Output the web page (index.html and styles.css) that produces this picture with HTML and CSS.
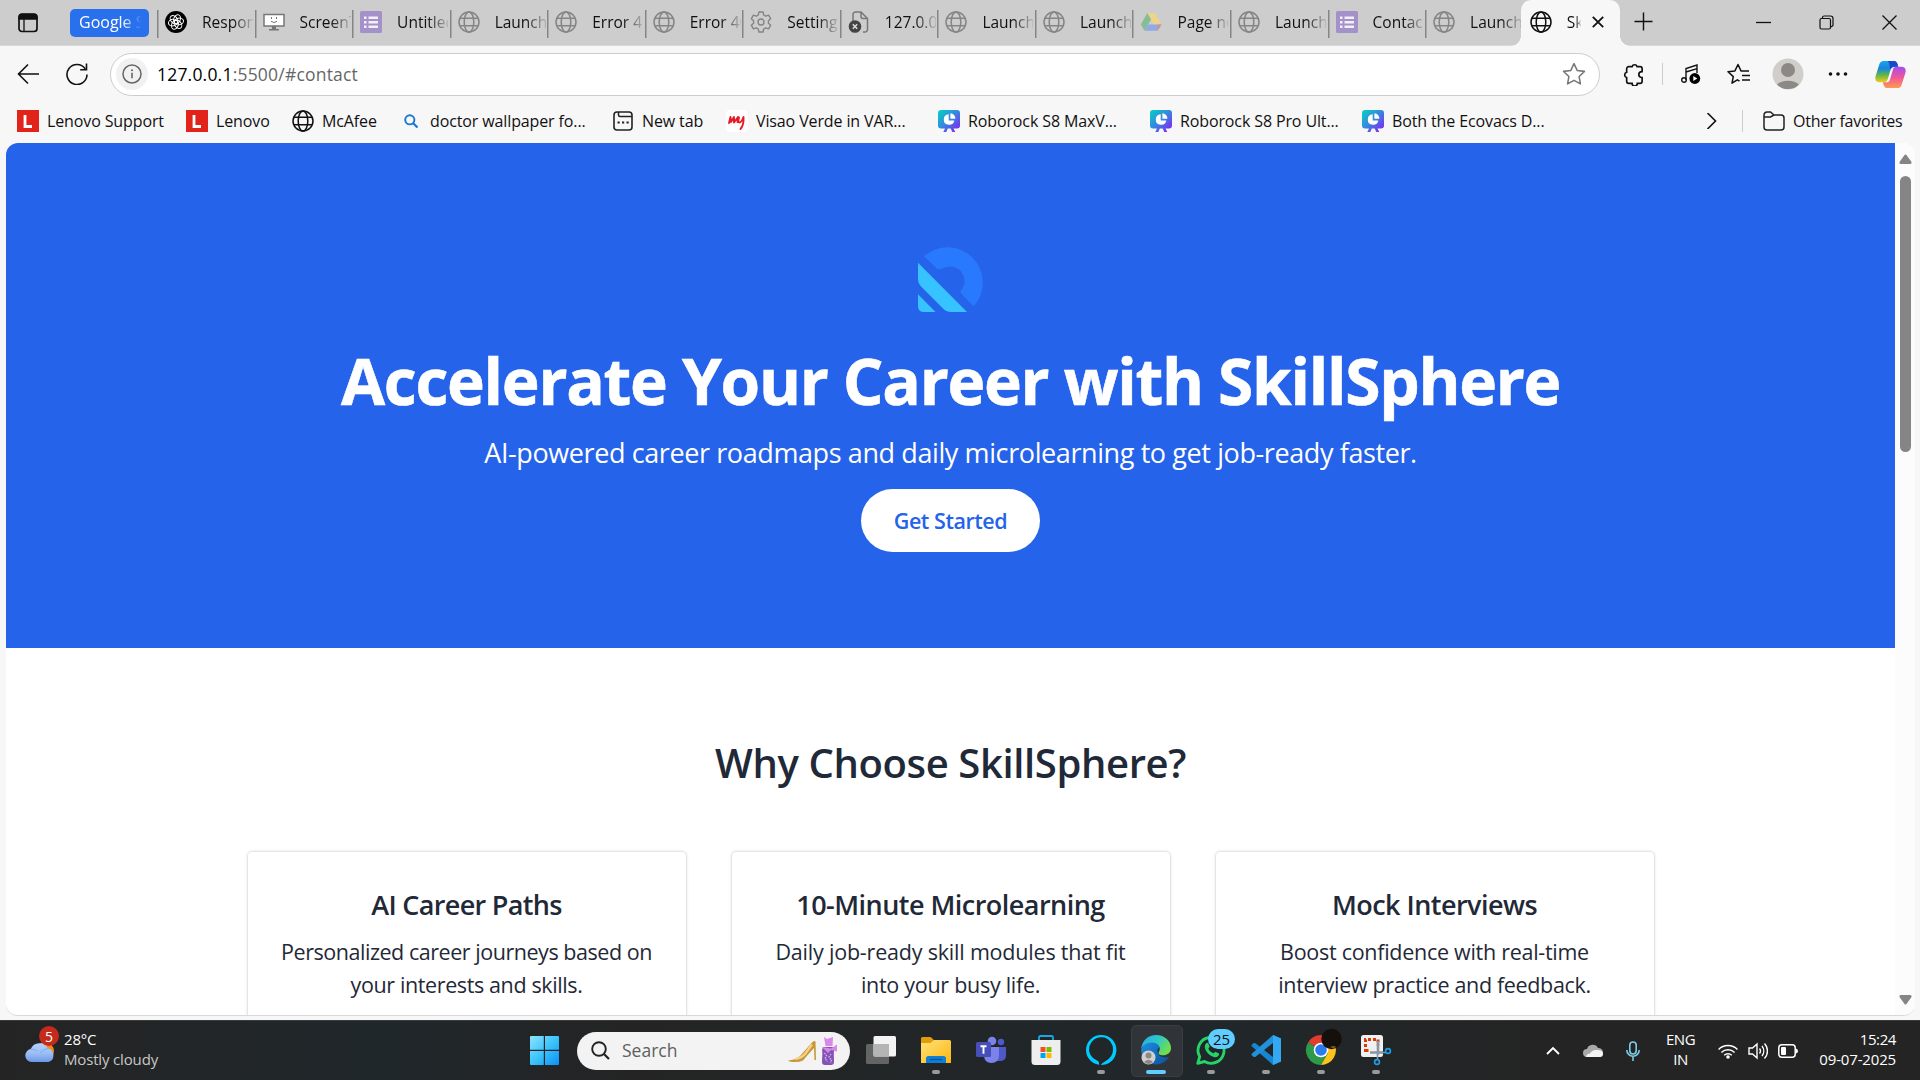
FILE: index.html
```html
<!DOCTYPE html>
<html lang="en">
<head>
<meta charset="utf-8">
<title>SkillSphere</title>
<link rel="stylesheet" href="styles.css">
</head>
<body>
<svg class="defs" aria-hidden="true">
  <defs>
    <linearGradient id="robo-g" x1="0" y1="0" x2="1" y2="1"><stop offset="0" stop-color="#00d4c0"/><stop offset=".5" stop-color="#3b82e0"/><stop offset="1" stop-color="#8b18f5"/></linearGradient>
    <linearGradient id="win-g" x1="0" y1="0" x2="1" y2="1"><stop offset="0" stop-color="#8ee3ff"/><stop offset=".5" stop-color="#3cc4fb"/><stop offset="1" stop-color="#0a90f5"/></linearGradient>
    <linearGradient id="cloud-g" x1="0" y1="0" x2="0" y2="1"><stop offset="0" stop-color="#b4d0fb"/><stop offset=".55" stop-color="#9bbdf6"/><stop offset="1" stop-color="#6d98e6"/></linearGradient>
    <linearGradient id="folder-g" x1="0" y1="0" x2="1" y2="1"><stop offset="0" stop-color="#ffe27a"/><stop offset="1" stop-color="#fbb710"/></linearGradient>
    <linearGradient id="edge-top" x1="0" y1="0" x2="1" y2=".5"><stop offset="0" stop-color="#2aa6ee"/><stop offset=".55" stop-color="#2fc6c6"/><stop offset="1" stop-color="#6ee04e"/></linearGradient>
    <linearGradient id="edge-bot" x1="0" y1="0" x2="1" y2="1"><stop offset="0" stop-color="#1c94e8"/><stop offset="1" stop-color="#0b4f9c"/></linearGradient>
    <linearGradient id="cop-a" x1="0" y1="0" x2="0" y2="1"><stop offset="0" stop-color="#17a6f2"/><stop offset=".35" stop-color="#1a83dd"/><stop offset=".65" stop-color="#58b64e"/><stop offset="1" stop-color="#f7cc13"/></linearGradient>
    <linearGradient id="cop-b" x1="0" y1="0" x2="0" y2="1"><stop offset="0" stop-color="#a44df0"/><stop offset=".5" stop-color="#f0569a"/><stop offset="1" stop-color="#ff9a4d"/></linearGradient>
    <symbol id="globe" viewBox="0 0 22 22"><g fill="none" stroke="currentColor" stroke-width="1.5"><circle cx="11" cy="11" r="10"/><ellipse cx="11" cy="11" rx="4.8" ry="10"/><path d="M1.9 7.3h18.2M1.9 14.7h18.2"/></g></symbol>
    <symbol id="form" viewBox="0 0 22 22"><rect width="22" height="22" rx="1.5" fill="#a591c9"/><path d="M4 5.5h2.5v2.5H4zM8.5 5.5H18v2.5H8.5zM4 10h2.5v2.5H4zM8.5 10H18v2.5H8.5zM4 14.5h2.5V17H4zM8.5 14.5H18V17H8.5z" fill="#f4f0fa"/></symbol>
    <symbol id="lenovo" viewBox="0 0 22 22"><rect width="22" height="22" fill="#e2231a"/><path d="M8 5v11.5h7" fill="none" stroke="#fff" stroke-width="2.8"/></symbol>
    <symbol id="robo" viewBox="0 0 22 22"><path d="M3 0h16a3 3 0 0 1 3 3v12.500a3 3 0 0 1-3 3h-3.500l1.800 3.500h-3l-1.600-3.500H9.800L8.300 22h-3L7 18.500H3a3 3 0 0 1-3-3V3a3 3 0 0 1 3-3z" fill="url(#robo-g)"/><path d="M10.700 4.200a5.300 5.300 0 1 0 5.600 6.300h-5.600z" fill="#fff"/><path d="M12.400 3.200v5.500h5a5.300 5.300 0 0 0-5-5.500z" fill="#fff"/></symbol>
  </defs>
</svg>

<div class="tabstrip">
  <svg class="workspace" viewBox="0 0 20 20"><rect x="1" y="1.5" width="18" height="17" rx="3" fill="none" stroke="#111" stroke-width="1.7"/><path d="M1 6V4a3 3 0 0 1 3-3h12a3 3 0 0 1 3 3v2zM6 6v12" fill="#111" stroke="#111" stroke-width="1.3"/></svg>
  <div class="group"><span class="t">Google S</span></div>
  <div class="tabs">
    <div class="tab"><svg viewBox="0 0 22 22"><circle cx="11" cy="11" r="11" fill="#000"/><g fill="none" stroke="#fff" stroke-width="1"><ellipse cx="11" cy="8" rx="3.3" ry="4.6" transform="rotate(20 11 11)"/><ellipse cx="11" cy="8" rx="3.3" ry="4.6" transform="rotate(80 11 11)"/><ellipse cx="11" cy="8" rx="3.3" ry="4.6" transform="rotate(140 11 11)"/><ellipse cx="11" cy="8" rx="3.3" ry="4.6" transform="rotate(200 11 11)"/><ellipse cx="11" cy="8" rx="3.3" ry="4.6" transform="rotate(260 11 11)"/><ellipse cx="11" cy="8" rx="3.3" ry="4.6" transform="rotate(320 11 11)"/></g></svg><span class="t">Respon</span></div>
    <div class="tab"><svg viewBox="0 0 22 22"><path d="M1 3.500h20v11.500H1z" fill="#fff" stroke="#777" stroke-width="1.5"/><path d="M9 15h4v3H9zM6 18h10v1.500H6z" fill="#777"/><path d="M8.500 6v2M13.500 6v2M8 10.300q3 2.500 6 0" stroke="#777" fill="none"/></svg><span class="t">ScreenT</span></div>
    <div class="tab"><svg><use href="#form"/></svg><span class="t">Untitled</span></div>
    <div class="tab dim"><svg><use href="#globe"/></svg><span class="t">Launch</span></div>
    <div class="tab dim"><svg><use href="#globe"/></svg><span class="t">Error 40</span></div>
    <div class="tab dim"><svg><use href="#globe"/></svg><span class="t">Error 40</span></div>
    <div class="tab dim"><svg viewBox="0 0 22 22"><g fill="none" stroke="currentColor" stroke-width="1.4" stroke-linejoin="round"><path d="M8.900 1h4.200l.6 3 2 1.200 2.900-1 2.100 3.600-2.300 2v2.400l2.300 2-2.100 3.600-2.900-1-2 1.200-.6 3H8.900l-.6-3-2-1.200-2.900 1-2.100-3.600 2.300-2V9.800l-2.300-2 2.100-3.600 2.900 1 2-1.200z"/><circle cx="11" cy="11" r="3"/></g></svg><span class="t">Setting</span></div>
    <div class="tab dim"><svg viewBox="0 0 22 22"><path d="M5 11V3.500A2.500 2.500 0 0 1 7.500 1H13l6.500 6.500v11A2.500 2.500 0 0 1 17 21h-2M13 1v4.500a2 2 0 0 0 2 2h4.500" fill="none" stroke="#777" stroke-width="1.5"/><circle cx="7" cy="15.500" r="6.300" fill="#444"/><path d="M4.800 13.300l4.400 4.400M9.200 13.300l-4.400 4.400" stroke="#ddd" stroke-width="1.5"/></svg><span class="t">127.0.0</span></div>
    <div class="tab dim"><svg><use href="#globe"/></svg><span class="t">Launch</span></div>
    <div class="tab dim"><svg><use href="#globe"/></svg><span class="t">Launch</span></div>
    <div class="tab"><svg viewBox="0 0 22 22"><path d="M7.300 2h7.400L11 8.500 4.500 19.800.8 13.400z" fill="#86bd95"/><path d="M7.300 2h7.400l6.700 11.500h-7.300z" fill="#eed488"/><path d="M4.500 19.800L8 13.500h13.400L17.600 19.800z" fill="#8fabe2"/><path d="M17.600 13.500h3.800l-3.600 6z" fill="#dd8d85"/></svg><span class="t">Page no</span></div>
    <div class="tab dim"><svg><use href="#globe"/></svg><span class="t">Launch</span></div>
    <div class="tab"><svg><use href="#form"/></svg><span class="t">Contac</span></div>
    <div class="tab dim"><svg><use href="#globe"/></svg><span class="t">Launch</span></div>
    <div class="tab active"><svg><use href="#globe"/></svg><span class="t short">Sk</span><svg class="close" viewBox="0 0 12 12"><path d="M.8.8l10.400 10.400M11.200.8L.8 11.200" stroke="#111" stroke-width="1.8"/></svg></div>
  </div>
  <svg class="plus" viewBox="0 0 20 20"><path d="M10 .5v19M.5 10h19" stroke="#111" stroke-width="1.5"/></svg>
  <div class="winctl">
    <svg viewBox="0 0 15 15"><path d="M0 7.500h15" stroke="#111" stroke-width="1.3"/></svg>
    <svg viewBox="0 0 15 15"><rect x="1" y="3.500" width="10.500" height="10.500" rx="1.500" fill="none" stroke="#111" stroke-width="1.2"/><path d="M3.500 3.500V2.200Q3.800 1 5 1h6.500Q14 1 14 3.500V10q0 1.500-2.500 1.800" fill="none" stroke="#111" stroke-width="1.2"/></svg>
    <svg viewBox="0 0 15 15"><path d="M.5.5l14 14M14.500.5l-14 14" stroke="#111" stroke-width="1.3"/></svg>
  </div>
</div>

<div class="toolbar">
  <svg class="back" viewBox="0 0 22 22"><path d="M22 11H1.500M11 1.500L1.500 11l9.500 9.500" fill="none" stroke="#111" stroke-width="1.6"/></svg>
  <svg class="reload" viewBox="0 0 22 22"><path d="M19.200 5.800A10 10 0 1 0 21 11.500M20.500.5v6.300h-6.300" fill="none" stroke="#111" stroke-width="1.6"/></svg>
  <div class="address">
    <span class="info"><svg viewBox="0 0 20 20"><circle cx="10" cy="10" r="9" fill="none" stroke="#666" stroke-width="1.5"/><path d="M10 8.800v5.400" stroke="#666" stroke-width="1.6"/><circle cx="10" cy="6.300" r="1" fill="#666"/></svg></span>
    <span class="url"><b>127.0.0.1</b>:5500/#contact</span>
    <svg class="star" viewBox="0 0 22 22"><path d="M11 1.500l2.900 6.200 6.700.9-4.900 4.700 1.200 6.800L11 16.800l-5.900 3.300 1.200-6.800L1.400 8.600l6.700-.9z" fill="none" stroke="#777" stroke-width="1.4" stroke-linejoin="round"/></svg>
  </div>
  <svg class="puzzle" viewBox="0 0 22 22"><path d="M5.500 3.500h3.200a2.500 2.500 0 0 1 4.800 0h2.800a2 2 0 0 1 2 2v2.700h-.8a2.900 2.900 0 0 0 0 5.700h.8v3.600a2 2 0 0 1-2 2h-2.600a2.500 2.500 0 0 1-5 0H5.500a2 2 0 0 1-2-2v-3.600a2.600 2.600 0 0 1 0-5V5.500a2 2 0 0 1 2-2z" fill="none" stroke="#111" stroke-width="1.6"/></svg>
  <i class="vr"></i>
  <svg class="music" viewBox="0 0 20 20"><path d="M5 16V4.500L16 1v8M5 8l11-3.300" fill="none" stroke="#111" stroke-width="1.4"/><circle cx="3" cy="16" r="2.300" fill="none" stroke="#111" stroke-width="1.4"/><circle cx="13.800" cy="14.500" r="5.400" fill="#000"/><path d="M12.300 11.900v5.200l4-2.600z" fill="#fff"/></svg>
  <svg class="favs" viewBox="0 0 23 22"><path d="M12.500 18l-2.200-1.200L5 20.200l1.300-6.600L1 8.800l6.900-.9L11 1.500l3 6.400h8M15 12.500h8M15 17h8" fill="none" stroke="#111" stroke-width="1.5" stroke-linejoin="round"/></svg>
  <svg class="avatar" viewBox="0 0 32 32"><circle cx="16" cy="16" r="15.500" fill="#d0cecb"/><circle cx="16" cy="12" r="7" fill="#8b8885"/><path d="M5 26.500a13 8 0 0 1 22 0 15.500 15.500 0 0 1-22 0z" fill="#8b8885"/></svg>
  <svg class="dots" viewBox="0 0 20 6"><g fill="#111"><circle cx="2.500" cy="3" r="1.800"/><circle cx="10" cy="3" r="1.800"/><circle cx="17.500" cy="3" r="1.800"/></g></svg>
  <svg class="copilot" viewBox="0 0 32 32"><path d="M9 2h10.500c2 0 3 1.200 3.600 3l.9 3h-4c-2.500 0-3.500 1.500-4.200 4l-2.500 8.500C12.500 23 11.500 24 9 24H5c-4 0-5.500-2.500-4.300-6.500L4.300 6C5.200 3.200 6.500 2 9 2z" fill="url(#cop-a)"/><path d="M16 2h3.500c2 0 3 1.200 3.600 3l.9 3h-4c-2 0-3 .9-3.800 2.800C14.500 7 15.500 4 13 2z" fill="#1948c8"/><path d="M23 30H13c-2.500 0-3.600-1.500-4.100-3.500L8 24h3.500c2.500 0 3.600-1.300 4.300-4l2.500-8.500C19 9 20 8 22.500 8H27c4 0 5.500 2.500 4.300 6.500L27.700 26c-.9 2.800-2.200 4-4.700 4z" fill="url(#cop-b)"/></svg>
</div>

<div class="bookmarks">
  <a><svg><use href="#lenovo"/></svg><span>Lenovo Support</span></a>
  <a><svg><use href="#lenovo"/></svg><span>Lenovo</span></a>
  <a><svg><use href="#globe"/></svg><span>McAfee</span></a>
  <a class="doc"><svg viewBox="0 0 14 14"><circle cx="5.800" cy="5.800" r="4.600" fill="none" stroke="#1a78d0" stroke-width="1.9"/><path d="M9 9l4.500 4.500" stroke="#1a78d0" stroke-width="2.2"/></svg><span>doctor wallpaper fo...</span></a>
  <a class="nt"><svg viewBox="0 0 20 20"><rect x="1" y="1" width="18" height="18" rx="3" fill="none" stroke="#222" stroke-width="1.6"/><path d="M5.500 1v3q0 1.500 1.500 1.500H19" fill="none" stroke="#222" stroke-width="1.5"/><path d="M4.500 10.500h2.200v2H4.500zM9 10.500h2.200v2H9zM13.500 10.500h2.200v2h-2.200z" fill="#222"/></svg><span>New tab</span></a>
  <a><svg viewBox="0 0 22 22"><rect width="22" height="22" rx="4" fill="#fff"/><path d="M3 13l1.500-6L5 12l3-5v5.500L12 7l-.5 5 M13 7.500q-1.500 5 .5 5t4-5.500Q18 15 14.500 19" fill="none" stroke="#e51b23" stroke-width="1.9" stroke-linecap="round" stroke-linejoin="round"/></svg><span>Visao Verde in VAR...</span></a>
  <a><svg><use href="#robo"/></svg><span>Roborock S8 MaxV...</span></a>
  <a><svg><use href="#robo"/></svg><span>Roborock S8 Pro Ult...</span></a>
  <a><svg><use href="#robo"/></svg><span>Both the Ecovacs D...</span></a>
  <svg class="more" viewBox="0 0 11 16"><path d="M1.500 0l8 8-8 8" fill="none" stroke="#111" stroke-width="1.6"/></svg>
  <i class="vr"></i>
  <a class="other"><svg viewBox="0 0 22 20"><path d="M1 4a3 3 0 0 1 3-3h3.500l3.500 3h7a3 3 0 0 1 3 3v9a3 3 0 0 1-3 3H4a3 3 0 0 1-3-3zM1 6h6.500L11 4" fill="none" stroke="#222" stroke-width="1.5"/></svg><span>Other favorites</span></a>
</div>

<div class="frame">
  <div class="viewport">
    <main class="page">
      <section class="hero">
        <svg class="logo" viewBox="0 0 66 66"><path d="M6 10.300A35.300 35.300 0 0 1 55.700 60.300L43.700 48.300q-1.700-1.700-1-3.500A14.500 14.500 0 0 0 25 22.300q-4 2-6.200.2z" fill="#2979ff"/><path d="M0 16.800L49 66H33q-4.500 0-7.500-3L2.800 40.300Q0 37.500 0 33z" fill="#37c3ff"/><path d="M0 48.300L17.500 66H6q-6 0-6-6z" fill="#37c3ff"/></svg>
        <h1>Accelerate Your Career with SkillSphere</h1>
        <p>AI-powered career roadmaps and daily microlearning to get job-ready faster.</p>
        <a class="cta">Get Started</a>
      </section>
      <section class="why">
        <h2>Why Choose SkillSphere?</h2>
        <div class="cards">
          <article class="card paths"><h3>AI Career Paths</h3><p><span class="l1">Personalized career journeys based on</span><br><span class="l2">your interests and skills.</span></p></article>
          <article class="card micro"><h3>10-Minute Microlearning</h3><p><span class="l1">Daily job-ready skill modules that fit</span><br><span class="l2">into your busy life.</span></p></article>
          <article class="card mock"><h3>Mock Interviews</h3><p><span class="l1">Boost confidence with real-time</span><br><span class="l2">interview practice and feedback.</span></p></article>
        </div>
      </section>
    </main>
    <div class="scroll">
      <svg viewBox="0 0 13 10"><path d="M5.500 1q1-1 2 0l5 7q.5 1.500-1 2h-10q-1.500-.5-1-2z" fill="#858585"/></svg>
      <i class="thumb"></i>
      <svg class="down" viewBox="0 0 13 10"><path d="M5.500 9q1 1 2 0l5-7q.5-1.500-1-2h-10q-1.500.5-1 2z" fill="#858585"/></svg>
    </div>
  </div>
</div>

<footer class="taskbar">
  <div class="weather">
    <div class="wicon"><svg viewBox="0 0 30 26"><circle cx="20" cy="14" r="9" fill="#f08a1d"/><path d="M6.500 25a6.500 6.500 0 0 1-.8-12.900A9.500 9.500 0 0 1 23 11.500 7 7 0 0 1 23.500 25z" fill="url(#cloud-g)"/><path d="M5.700 12.200q4-.7 6.500 2M23 11.600q-5 .5-7.500 4" fill="none" stroke="#7fa6ea" stroke-width="1"/></svg><span class="badge red">5</span></div>
    <div class="wtext"><span>28°C</span><br><span class="sub">Mostly cloudy</span></div>
  </div>
  <svg class="start" viewBox="0 0 29 29"><path d="M1 0h12.800v13.800H0V1a1 1 0 0 1 1-1zM15 0h13a1 1 0 0 1 1 1v12.800H15zM0 15h13.800v14H1a1 1 0 0 1-1-1zM15 15h14v13a1 1 0 0 1-1 1H15z" fill="url(#win-g)"/></svg>
  <div class="search">
    <svg class="glass" viewBox="0 0 19 19"><circle cx="8" cy="8" r="6.800" fill="none" stroke="#222" stroke-width="1.9"/><path d="M13 13l5 5" stroke="#222" stroke-width="2.2"/></svg>
    <span>Search</span>
    <svg class="shoe" viewBox="0 0 50 30"><path d="M0 24.500q7-.5 12-4.500L24 6.500q2-2.500 3.500-1L28 24h-1.500l-.5-12-5 5.500-6 7q-3 1.500-8 1.500-5 0-7-1.500z" fill="#c9973a"/><path d="M7 23q6-.5 10-5l7-9.500" fill="none" stroke="#f2d48a" stroke-width="2.2"/><path d="M35 11h10q1.500 2 .8 6l.2 9q0 3-3 3h-6q-3 0-3-3l.4-9q-.6-4 .6-6z" fill="#8551b4"/><path d="M36 1l3 2 3-1 3-1-.5 9h-7zM34 11l9 1.500 6-4v7l-6-1.500-3 3z" fill="#d987e8"/><path d="M36.500 17l2 2.500-1.500 3 2.500 3M43 18l-2 3 2.500 3-1 3" stroke="#d3b8f2" fill="none" stroke-width="1.3" stroke-dasharray="1.500 1"/></svg>
  </div>
  <div class="apps">
    <div class="app"><svg viewBox="0 0 30 30"><rect x="0" y="9" width="23" height="20" rx="1.500" fill="#646464"/><rect x="7.500" y="1" width="22.500" height="20.500" rx="1.500" fill="#f3f3f3"/><path d="M7.500 9H23v12.500H9q-1.500 0-1.500-1.500z" fill="#b5b5b5"/></svg></div>
    <div class="app run"><svg viewBox="0 0 30 30"><path d="M0 3.500Q0 2 1.500 2H9q1 0 2 1.200l2 2V12H0z" fill="#e09c0a"/><path d="M0 8h9.500L13 5h15.500Q30 5 30 6.500v21.500H0z" fill="url(#folder-g)"/><path d="M5 28v-4.500q0-2.500 2.500-2.500h15q2.500 0 2.500 2.500V28z" fill="#0f7fd4"/><path d="M9 24.500h12" stroke="#07559b" stroke-width="1.3"/></svg></div>
    <div class="app"><svg viewBox="0 0 30 30"><circle cx="25" cy="7" r="3.200" fill="#4f58c8"/><circle cx="16" cy="6" r="4.300" fill="#7b83eb"/><path d="M20 12h10v8.500q0 4.500-4.500 5.500H20z" fill="#4f58c8"/><path d="M8 12h15v9q-.5 7-7.500 7T8 21z" fill="#7b83eb"/><rect y="7" width="15" height="15" rx="1.500" fill="#464eb8"/><path d="M4.500 11.300h6M7.500 11.300v7.500" stroke="#fff" stroke-width="1.9"/></svg></div>
    <div class="app"><svg viewBox="0 0 30 30"><path d="M8 6V2.500Q8 1 9.500 1h11Q22 1 22 2.500V6" fill="none" stroke="#16a9ea" stroke-width="1.8"/><path d="M.5 5h29v21.500q0 3.500-3.500 3.500H4q-3.500 0-3.500-3.500z" fill="#eee"/><path fill="#f25022" d="M9.500 12h5v5h-5z"/><path fill="#7fba00" d="M15.500 12h5v5h-5z"/><path fill="#00a4ef" d="M9.500 18h5v5h-5z"/><path fill="#ffb900" d="M15.500 18h5v5h-5z"/></svg></div>
    <div class="app run"><svg viewBox="0 0 30 30"><path fill-rule="evenodd" d="M15 0a15 15 0 1 1-2 29.800v-2q0-1.500-2-2.300A12 12 0 1 1 27 15q0 7-8 11.500-3.500 1.500-4 3.500A15 15 0 0 1 15 0z" fill="#00caff"/></svg></div>
    <div class="app run on"><svg viewBox="0 0 30 30"><path d="M0 15A15 15 0 0 1 15 4.500c7 0 7 6 3 8-3 2-2 8 3 9.500 3 1 6 0 7 0a15 15 0 0 1-28-7z" fill="url(#edge-bot)"/><path d="M0 14.500C1 5 7.500 0 15 0c9 0 15 6.500 15 13 0 5-4 7.300-8 7.300-3.500 0-5.500-1.300-4-3.500C20.500 12 17 7.500 11 7.500 5 7.500 1 11 0 14.500z" fill="url(#edge-top)"/><circle cx="7.500" cy="22.500" r="7" fill="#d2d0ce"/><circle cx="7.500" cy="20.500" r="3" fill="#8b8885"/><path d="M3 27q4.500-4.500 9 0-4.500 4-9 0z" fill="#8b8885"/></svg></div>
    <div class="app run"><svg viewBox="0 0 30 30"><path d="M1.800 28.300l1.900-6.700A13 13 0 1 1 8.500 26.500z" fill="none" stroke="#25d366" stroke-width="2.9" stroke-linejoin="round"/><path d="M10 8.500c1-1 2-.8 2.500.3l1 2.500c.3 1-1.300 1.800-1 2.700 1 2 2.700 3.500 4.800 4.300 1 .3 1.700-1.800 2.600-1.400l2.600 1.300c1 .6.500 2-.5 3-2 1.800-5.500.8-8.500-1.500C9.500 16.500 7.300 11.500 10 8.500z" fill="#25d366"/></svg><span class="badge blue">25</span></div>
    <div class="app run"><svg viewBox="0 0 30 30"><path d="M22 0l8 3.500v23L22 30 1 11.500q-1-1 0-2l1.500-1.200q1-.6 2 0L22 22z" fill="#1486d3"/><path d="M22 30L22 8 4.500 21.700q-1 .6-2 0L1 20.500q-1-1 0-2L22 0z" fill="#2091da"/><path d="M22 0l8 3.500v23L22 30z" fill="#35a8f2"/></svg></div>
    <div class="app run"><svg viewBox="0 0 30 30"><path d="M15 15L2 7.500a15 15 0 0 1 26 0z" fill="#e33b2e"/><path d="M15 15L2 7.500A15 15 0 0 0 15 30l6.500-11z" fill="#2c9a48"/><path d="M15 8h13.200A15 15 0 0 1 15 30l7-12z" fill="#fcc31c"/><circle cx="15" cy="15" r="7.300" fill="#fff"/><circle cx="15" cy="15" r="5.800" fill="#2b7af0"/><circle cx="25.500" cy="4" r="10.200" fill="#16100c"/><path d="M24 12q4-2 6 0-2 2-6 0z" fill="#8a5438"/></svg></div>
    <div class="app run"><svg viewBox="0 0 30 30"><rect width="22" height="22" rx="2.500" fill="#eef0f2"/><path d="M4.500 17V4.500H17v6M4.500 15.500H8" fill="none" stroke="#d83b01" stroke-width="3" stroke-dasharray="3 2"/><path d="M17 6v13.500M9 17.500h13" stroke="#8a97a3" stroke-width="2.6"/><path d="M16.500 19v6M20 17.500h5" stroke="#8a97a3" stroke-width="1.6"/><circle cx="16" cy="27" r="2.400" fill="none" stroke="#1e9be2" stroke-width="1.7"/><circle cx="27" cy="16" r="2.400" fill="none" stroke="#1e9be2" stroke-width="1.7"/></svg></div>
  </div>
  <div class="tray">
    <svg class="up" viewBox="0 0 14 9"><path d="M1 8l6-6 6 6" fill="none" stroke="#fff" stroke-width="1.9"/></svg>
    <svg class="cloud" viewBox="0 0 20 14"><path d="M4 13A4 4 0 0 1 4 5a6 6 0 0 1 11-1 4.500 4.500 0 0 1 1 9z" fill="#a9a9a9"/><path d="M3 13q0-3 4-3.500Q9 5.500 14 6q6 0 6 4 0 3-3 3H5z" fill="#f4f4f4"/></svg>
    <svg class="mic" viewBox="0 0 14 20"><rect x="3.800" y="1" width="6.400" height="12" rx="3.200" fill="none" stroke="#7ccbe8" stroke-width="1.6"/><path d="M.8 9a6.200 6.200 0 0 0 12.400 0M7 15.500V20" fill="none" stroke="#7ccbe8" stroke-width="1.6"/></svg>
    <div class="lang"><span>ENG</span><br><span>IN</span></div>
    <svg class="wifi" viewBox="0 0 20 16"><g fill="none" stroke="#fff" stroke-width="1.5"><path d="M.6 6.500a13.300 13.300 0 0 1 18.800 0M3.400 9.500a9.400 9.400 0 0 1 13.200 0M6.200 12.300a5.400 5.400 0 0 1 7.600 0"/></g><circle cx="10" cy="14" r="1.800" fill="#fff"/></svg>
    <svg class="vol" viewBox="0 0 20 18"><g fill="none" stroke="#fff" stroke-width="1.4"><path d="M1 6h3.500L9 2v14l-4.500-4H1zM11.500 6.500a4 4 0 0 1 0 5M14 4a8 8 0 0 1 0 10M16.500 1.500a11 11 0 0 1 0 15"/></g></svg>
    <svg class="bat" viewBox="0 0 20 14"><rect x=".8" y=".8" width="16.400" height="12.400" rx="3" fill="none" stroke="#fff" stroke-width="1.5"/><rect x="3" y="3" width="5" height="8" rx="1" fill="#fff"/><path d="M18 4.500q2 .5 2 2.500t-2 2.500z" fill="#fff"/></svg>
    <div class="clock"><span class="time">15:24</span><br><span>09-07-2025</span></div>
  </div>
</footer>
</body>
</html>
```
FILE: styles.css
```css
* { box-sizing: border-box; }
body { margin: 0; width: 1920px; height: 1080px; overflow: hidden; display: flex; flex-direction: column; background: #f7f7f7; color: #111; font-family: "Open Sans", "Noto Sans", sans-serif; font-size: 15px; }
span { white-space: nowrap; }
svg { display: block; flex: none; }
.defs { position: absolute; width: 0; height: 0; }

/* Tab strip */
.tabstrip { height: 46px; flex: none; display: flex; align-items: center; background: #cdcdcd; border-bottom: 1px solid #d8d8d8; padding-left: 18px; }
.workspace { width: 20px; height: 20px; }
.group { margin-left: 32px; width: 79px; height: 28px; border-radius: 5px; background: #2970ec; color: #fff; display: flex; align-items: center; padding: 0 0 1px 9px; font-size: 16px; }
.group .t { width: 66px; -webkit-mask-image: linear-gradient(90deg, #000 65%, transparent 95%); }
.tabs { display: flex; margin-left: 8px; height: 46px; }
.tab { width: 97.55px; display: flex; align-items: center; padding: 0 0 2px 8px; background: linear-gradient(#858585, #858585) 0 10px / 1.5px 28px no-repeat; }
.tab svg { width: 22px; height: 22px; }
.tab.dim svg { color: #858585; }
.tab .t { margin-left: 15px; width: 51px; font-size: 15.5px; line-height: 24px; -webkit-mask-image: linear-gradient(90deg, #000 60%, transparent 105%); }
.tab.active { position: relative; background: #f7f7f7; border-radius: 10px 10px 0 0; width: 99px; margin-left: -2px; padding-left: 9px; }
.tab.active::before, .tab.active::after { content: ""; position: absolute; bottom: 0; width: 10px; height: 10px; }
.tab.active::before { left: -10px; background: radial-gradient(circle at 0 0, transparent 9.5px, #f7f7f7 10px); }
.tab.active::after { right: -10px; background: radial-gradient(circle at 100% 0, transparent 9.5px, #f7f7f7 10px); }
.tab .t.short { width: 14px; }
.tab svg.close { width: 12px; height: 12px; margin-left: 11px; }
.plus { width: 19px; height: 19px; margin: 0 0 2px 14px; }
.winctl { display: flex; gap: 48px; margin: 0 23px 0 auto; }
.winctl svg { width: 15px; height: 15px; }

/* Address row */
.toolbar { height: 54px; flex: none; display: flex; align-items: center; padding: 2px 14px 0 17px; }
.back { width: 22px; height: 22px; }
.reload { width: 22px; height: 22px; margin-left: 27px; }
.address { width: 1490px; height: 43px; margin-left: 22px; border: 1px solid #ccc; border-radius: 22px; background: #fff; display: flex; align-items: center; padding: 0 13px 0 5px; }
.info { width: 32px; height: 32px; border-radius: 50%; background: #f1f1f1; display: grid; place-items: center; }
.info svg { width: 20px; height: 20px; }
.url { margin-left: 9px; font-size: 17.5px; letter-spacing: .2px; color: #666; }
.url b { font-weight: 400; color: #000; }
.star { width: 24px; height: 24px; margin-left: auto; }
.puzzle { width: 23px; height: 23px; margin-left: 23px; }
.vr { width: 1px; height: 22px; background: #ccc; display: block; }
.toolbar .vr { margin-left: 16px; }
.music { width: 20px; height: 20px; margin-left: 18px; }
.favs { width: 23px; height: 22px; margin-left: 26px; }
.avatar { width: 32px; height: 32px; margin-left: 22px; }
.dots { width: 20px; height: 6px; margin-left: 24px; }
.copilot { width: 31px; height: 31px; margin-left: auto; }

/* Favourites bar */
.bookmarks { height: 43px; flex: none; display: grid; grid-template-columns: 169px 106px 112px 209px 113px 212px 212px 212px 344px 36px 21px 1fr; align-items: center; padding: 0 0 1px 17px; font-size: 16px; letter-spacing: -.12px; }
.bookmarks a { display: flex; align-items: center; gap: 8px; }
.bookmarks a span { padding-bottom: 1px; }
.bookmarks a svg { width: 22px; height: 22px; }
.bookmarks .doc svg { width: 14px; height: 14px; }
.bookmarks .doc { gap: 12px; }
.bookmarks .nt svg { width: 20px; height: 20px; }
.bookmarks .nt { gap: 9px; }
.bookmarks .other { letter-spacing: -.2px; }
.bookmarks .more { width: 11px; height: 16px; }

/* Page */
.frame { flex: 1; min-height: 0; padding: 0 5px 4px 6px; }
.viewport { height: 873px; display: flex; border-radius: 12px; overflow: hidden; background: #fff; border-bottom: 1px solid #d8d8d8; }
.page { width: 1889px; height: 872px; overflow: hidden; color: #1f2937; text-align: center; }
.scroll { width: 20px; background: #fcfcfc; display: flex; flex-direction: column; align-items: center; padding: 11px 0 10px; }
.scroll svg { width: 13px; height: 10px; }
.thumb { width: 11px; height: 276px; margin-top: 12px; border-radius: 6px; background: #858585; }
.scroll .down { margin-top: auto; }
.hero { height: 505px; background: #2563eb; color: #fff; display: flex; flex-direction: column; align-items: center; padding-top: 103px; }
.logo { width: 66px; height: 66px; }
h1, h2, h3, p { margin: 0; white-space: nowrap; }
h1 { font-size: 64px; line-height: 80px; margin-top: 29px; font-weight: 700; letter-spacing: -1.28px; -webkit-text-stroke: .6px #fff; }
.hero p { font-size: 27px; line-height: 40px; margin-top: 12px; letter-spacing: -.4px; }
.cta { width: 179px; height: 63px; margin-top: 16px; border-radius: 32px; background: #fff; color: #2563eb; font-size: 21.5px; letter-spacing: -.45px; font-weight: 600; display: flex; align-items: center; justify-content: center; }
.why { padding-top: 85px; }
h2 { font-size: 40px; line-height: 60px; font-weight: 600; letter-spacing: -.38px; }
.cards { display: grid; grid-template-columns: repeat(3, 440px); gap: 44px; justify-content: center; margin-top: 58px; }
.card { height: 240px; border: 1px solid #e5e5e5; border-radius: 5px; box-shadow: 0 0 3px rgba(0, 0, 0, .1); padding-top: 33px; }
h3 { font-size: 27px; line-height: 40px; font-weight: 600; }
.paths h3 { letter-spacing: -.67px; }
.micro h3, .mock h3 { letter-spacing: -.53px; }
.card p { font-size: 21.5px; line-height: 33px; margin-top: 10px; }
.paths .l1 { letter-spacing: -.46px; }
.paths .l2 { letter-spacing: -.38px; }
.micro .l1 { letter-spacing: -.2px; }
.micro .l2, .mock .l1 { letter-spacing: -.28px; }
.mock .l2 { letter-spacing: -.35px; }

/* Taskbar */
.taskbar { height: 60px; flex: none; display: flex; align-items: center; background: linear-gradient(90deg, #242424, #20272b 20%, #242424 33%, #20272a 62%, #242424 80%, #242424); border-top: 1px solid #3c3c3c; color: #fff; }
.weather { width: 530px; display: flex; padding-left: 25px; }
.wicon { position: relative; width: 30px; height: 40px; margin-right: 9px; padding-top: 8px; }
.wicon svg { width: 30px; height: 26px; }
.badge { position: absolute; display: grid; place-items: center; border-radius: 12px; }
.red { left: 14px; top: -3px; width: 20px; height: 20px; background: #c42b1c; font-size: 14px; }
.blue { left: 24.5px; top: 8px; width: 27px; height: 20px; background: #60cdff; color: #111; font-size: 15px; }
.wtext, .lang, .clock { line-height: 20px; padding-bottom: 3px; letter-spacing: -.16px; }
.sub { color: #c8c8c8; }
.start { width: 29px; height: 29px; }
.search { width: 273px; height: 38px; margin-left: 18px; border-radius: 19px; background: #f3f3f3; color: #5f5f5f; font-size: 17.5px; display: flex; align-items: center; padding: 0 12px 0 14px; }
.search span { padding-bottom: 1px; }
.glass { width: 19px; height: 19px; margin-right: 12px; }
.shoe { width: 50px; height: 30px; margin-left: auto; }
.apps { display: flex; margin-left: 3.5px; height: 59px; }
.app { width: 55px; display: flex; flex-direction: column; align-items: center; padding-top: 14px; position: relative; }
.app svg { width: 30px; height: 30px; overflow: visible; position: relative; }
.run::after { content: ""; width: 8px; height: 4px; border-radius: 2px; background: #9a9a9a; margin-top: 5px; }
.on::before { content: ""; position: absolute; left: 2.5px; top: 4px; width: 50px; height: 50px; border-radius: 5px; background: #303438; border: 1px solid #3a3e41; }
.on::after { width: 20px; background: #60cdff; position: relative; }
.tray { flex: 1; display: flex; align-items: center; padding-right: 24px; }
.up { width: 14px; height: 9px; margin-left: 142px; }
.cloud { width: 20px; height: 14px; margin-left: 23px; }
.mic { width: 14px; height: 20px; margin-left: 23px; }
.lang { width: 40px; margin-left: 21px; text-align: center; letter-spacing: -.45px; }
.wifi { width: 20px; height: 16px; margin-left: 17px; }
.vol { width: 20px; height: 18px; margin-left: 10px; }
.bat { width: 20px; height: 14px; margin-left: 10px; }
.clock { margin-left: auto; text-align: right; }
.time { letter-spacing: -.4px; }
```
